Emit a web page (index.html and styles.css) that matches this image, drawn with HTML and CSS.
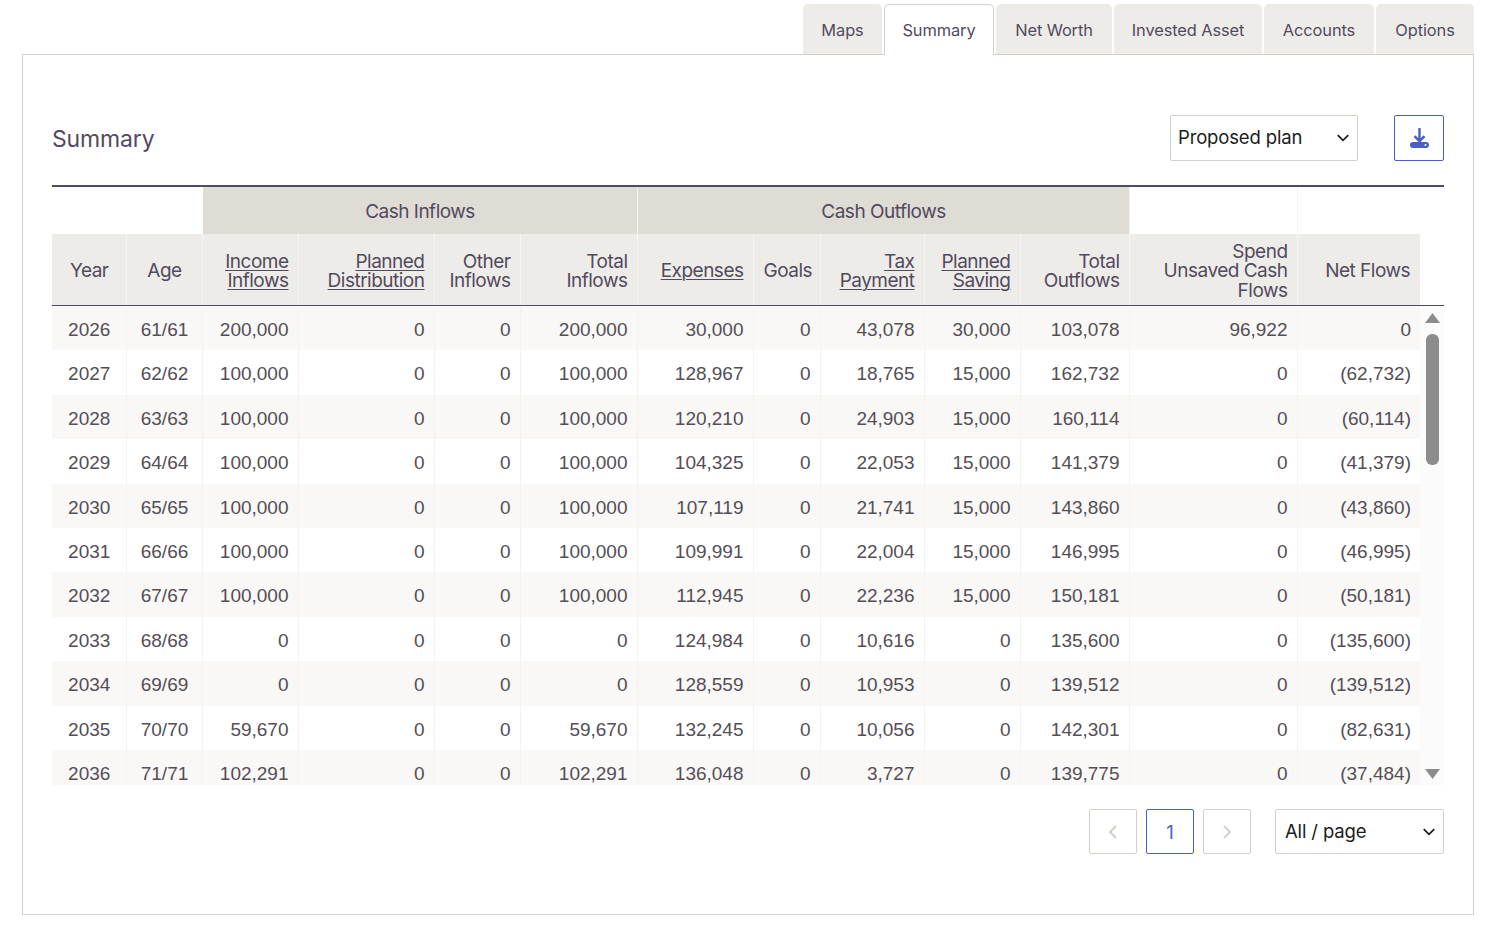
FILE: index.html
```html
<!DOCTYPE html>
<html lang="en">
<head>
<meta charset="utf-8">
<title>Summary</title>
<link rel="stylesheet" href="styles.css">
</head>
<body>
<nav class="tabs">
  <a class="tab t-maps">Maps</a>
  <a class="tab t-summary active">Summary</a>
  <a class="tab t-net">Net Worth</a>
  <a class="tab t-inv">Invested Asset</a>
  <a class="tab t-acc">Accounts</a>
  <a class="tab t-opt">Options</a>
</nav>
<main class="card">
  <header class="top">
    <h1 class="title">Summary</h1>
    <div class="select plan"><span>Proposed plan</span>
      <svg class="chev" viewBox="0 0 12 8"><path d="M1.500 1.500 6 6l4.500-4.500" /></svg>
    </div>
    <button class="dl" aria-label="Download">
      <svg viewBox="0 0 21 20" width="21" height="20">
        <path class="dl-arrow" d="M10.500 0v13M5.500 8.200l5 5 5-5"/>
        <path fill-rule="evenodd" d="M4 14h13a3 3 0 0 1 0 6H4a3 3 0 0 1 0-6zm12.500 2a1 1 0 1 0 0 2 1 1 0 0 0 0-2z"/>
      </svg>
    </button>
  </header>
  <section class="grid">
    <div class="head">
      <table>
        <colgroup><col class="c1"><col class="c2"><col class="c3"><col class="c4"><col class="c5"><col class="c6"><col class="c7"><col class="c8"><col class="c9"><col class="c10"><col class="c11"><col class="c12"><col class="c13"></colgroup>
        <thead>
          <tr class="group">
            <th colspan="2" class="blank"></th>
            <th colspan="4" class="band">Cash Inflows</th>
            <th colspan="5" class="band">Cash Outflows</th>
            <th class="blank"></th>
            <th class="blank"></th>
          </tr>
          <tr class="cols">
            <th class="ctr">Year</th><th class="ctr">Age</th>
            <th><u>Income<br>Inflows</u></th><th><u>Planned<br>Distribution</u></th><th>Other<br>Inflows</th><th>Total<br>Inflows</th>
            <th><u>Expenses</u></th><th>Goals</th><th><u>Tax<br>Payment</u></th><th><u>Planned<br>Saving</u></th><th>Total<br>Outflows</th>
            <th>Spend<br>Unsaved Cash<br>Flows</th><th>Net Flows</th>
          </tr>
        </thead>
      </table>
    </div>
    <div class="scroll">
      <table class="rows">
        <colgroup><col class="c1"><col class="c2"><col class="c3"><col class="c4"><col class="c5"><col class="c6"><col class="c7"><col class="c8"><col class="c9"><col class="c10"><col class="c11"><col class="c12"><col class="c13"></colgroup>
        <tbody>
          <tr><td class="ctr">2026</td><td class="ctr">61/61</td><td>200,000</td><td>0</td><td>0</td><td>200,000</td><td>30,000</td><td>0</td><td>43,078</td><td>30,000</td><td>103,078</td><td>96,922</td><td>0</td></tr>
          <tr><td class="ctr">2027</td><td class="ctr">62/62</td><td>100,000</td><td>0</td><td>0</td><td>100,000</td><td>128,967</td><td>0</td><td>18,765</td><td>15,000</td><td>162,732</td><td>0</td><td>(62,732)</td></tr>
          <tr><td class="ctr">2028</td><td class="ctr">63/63</td><td>100,000</td><td>0</td><td>0</td><td>100,000</td><td>120,210</td><td>0</td><td>24,903</td><td>15,000</td><td>160,114</td><td>0</td><td>(60,114)</td></tr>
          <tr><td class="ctr">2029</td><td class="ctr">64/64</td><td>100,000</td><td>0</td><td>0</td><td>100,000</td><td>104,325</td><td>0</td><td>22,053</td><td>15,000</td><td>141,379</td><td>0</td><td>(41,379)</td></tr>
          <tr><td class="ctr">2030</td><td class="ctr">65/65</td><td>100,000</td><td>0</td><td>0</td><td>100,000</td><td>107,119</td><td>0</td><td>21,741</td><td>15,000</td><td>143,860</td><td>0</td><td>(43,860)</td></tr>
          <tr><td class="ctr">2031</td><td class="ctr">66/66</td><td>100,000</td><td>0</td><td>0</td><td>100,000</td><td>109,991</td><td>0</td><td>22,004</td><td>15,000</td><td>146,995</td><td>0</td><td>(46,995)</td></tr>
          <tr><td class="ctr">2032</td><td class="ctr">67/67</td><td>100,000</td><td>0</td><td>0</td><td>100,000</td><td>112,945</td><td>0</td><td>22,236</td><td>15,000</td><td>150,181</td><td>0</td><td>(50,181)</td></tr>
          <tr><td class="ctr">2033</td><td class="ctr">68/68</td><td>0</td><td>0</td><td>0</td><td>0</td><td>124,984</td><td>0</td><td>10,616</td><td>0</td><td>135,600</td><td>0</td><td>(135,600)</td></tr>
          <tr><td class="ctr">2034</td><td class="ctr">69/69</td><td>0</td><td>0</td><td>0</td><td>0</td><td>128,559</td><td>0</td><td>10,953</td><td>0</td><td>139,512</td><td>0</td><td>(139,512)</td></tr>
          <tr><td class="ctr">2035</td><td class="ctr">70/70</td><td>59,670</td><td>0</td><td>0</td><td>59,670</td><td>132,245</td><td>0</td><td>10,056</td><td>0</td><td>142,301</td><td>0</td><td>(82,631)</td></tr>
          <tr><td class="ctr">2036</td><td class="ctr">71/71</td><td>102,291</td><td>0</td><td>0</td><td>102,291</td><td>136,048</td><td>0</td><td>3,727</td><td>0</td><td>139,775</td><td>0</td><td>(37,484)</td></tr>
        </tbody>
      </table>
      <div class="bar">
        <span class="arrow up"></span>
        <span class="thumb"></span>
        <span class="arrow down"></span>
      </div>
    </div>
  </section>
  <footer class="pager">
    <button class="pg off" aria-label="Previous"><svg viewBox="0 0 10 16"><path d="M8 2 2 8l6 6"/></svg></button>
    <button class="pg cur">1</button>
    <button class="pg off" aria-label="Next"><svg viewBox="0 0 10 16"><path d="M2 2l6 6-6 6"/></svg></button>
    <div class="select size"><span>All / page</span>
      <svg class="chev" viewBox="0 0 12 8"><path d="M1.500 1.500 6 6l4.500-4.500" /></svg>
    </div>
  </footer>
</main>
</body>
</html>
```
FILE: styles.css
```css
* { box-sizing: border-box; }
html, body { margin: 0; padding: 0; background: #fff; }
body {
  width: 1486px;
  height: 933px;
  overflow: hidden;
  font-family: Inter, "Liberation Sans", sans-serif;
  color: #524a5e;
  padding: 4px 12px 0 22px;
}
.tabs {
  display: flex;
  justify-content: flex-end;
  gap: 2px;
  height: 51px;
  position: relative;
  z-index: 1;
  font-size: 16.400px;
  letter-spacing: -0.1px;
}
.tab {
  display: flex;
  align-items: center;
  justify-content: center;
  height: 50px;
  background: #eeece8;
  border-radius: 5px 5px 0 0;
  padding-top: 2px;
}
.t-maps { width: 79px; }
.t-summary { width: 110px; height: 51px; background: #fff; border: 1px solid #d3d0c8; border-bottom: 0; padding-top: 0; }
.t-net { width: 116px; }
.t-inv { width: 148px; }
.t-acc { width: 110px; }
.t-opt { width: 98px; }
.card {
  margin-top: -1px;
  width: 1452px;
  height: 861px;
  border: 1px solid #d3d0c8;
  padding: 60px 29px 0;
}
.top { display: flex; align-items: center; height: 46px; margin-bottom: 24px; }
.title { margin: 0 auto 0 0; font-size: 23px; font-weight: 400; letter-spacing: -0.15px; padding-top: 2px; }
.select {
  display: flex;
  align-items: center;
  justify-content: space-between;
  height: 46px;
  border: 1px solid #d3d0c8;
  border-radius: 2px;
  font-size: 18.500px;
  letter-spacing: -0.15px;
  color: #1c1b20;
  padding: 0 7px 2px;
}
.plan { width: 188px; }
.chev { width: 14px; height: 10px; fill: none; stroke: #1c1b20; stroke-width: 1.500; margin-top: 2px; }
.dl {
  display: flex;
  align-items: center;
  justify-content: center;
  width: 50px;
  height: 46px;
  margin-left: 36px;
  background: #fff;
  border: 1px solid #4a5fc1;
  border-radius: 2px;
  padding: 0;
}
.dl svg { fill: #4a5fc1; }
.dl-arrow { fill: none; stroke: #4a5fc1; stroke-width: 2.400; }
.grid { border-top: 2px solid #524a5e; width: 1392px; }
.head { border-bottom: 1px solid #524a5e; }
table { border-collapse: collapse; table-layout: fixed; width: 1368px; }
.c1 { width: 74px; }
.c2 { width: 76px; }
.c3 { width: 96px; }
.c4 { width: 136px; }
.c5 { width: 86px; }
.c6 { width: 117px; }
.c7 { width: 116px; }
.c8 { width: 67px; }
.c9 { width: 104px; }
.c10 { width: 96px; }
.c11 { width: 109px; }
.c12 { width: 168px; }
.c13 { width: 123px; }
th { font-weight: 400; padding: 3px 9px 0 10px; font-size: 19px; letter-spacing: -0.5px; line-height: 19.500px; text-align: right; }
.group th { height: 47px; text-align: center; border-right: 1px solid #f4f3f0; }
.group .blank { background: #fff; }
.group th:first-child { border-right: 0; }
.group .band { background: #dfdbd5; border-right: 1px solid #f4f3f0; border-left: 1px solid #fff; }
.cols th { height: 71px; background: #eeece8; border-right: 1px solid #f7f6f3; }
.cols th:last-child, .group th:last-child { border-right: 0; padding-right: 10px; }
th.ctr, td.ctr { text-align: center; }
th u { text-underline-offset: 2px; text-decoration-thickness: 1px; }
.scroll { display: flex; height: 479px; overflow: hidden; }
.rows { flex: none; align-self: flex-start; }
td {
  height: 44.400px;
  padding: 3.800px 9px 0 10px;
  font-size: 19px;
  text-align: right;
  color: #544e56;
  border-right: 1px solid #f4f3f0;
  font-family: "Liberation Sans", Arial, sans-serif;
}
td:last-child { border-right: 0; }
.rows tr:nth-child(odd) td { background: #f9f8f6; }
.bar { flex: 1; position: relative; display: flex; flex-direction: column; align-items: center; padding-top: 28px; background: #fcfbfb; }
.thumb { width: 13px; height: 131px; background: #8c8c8c; border-radius: 6px; }
.arrow { position: absolute; left: 5px; width: 15px; height: 10px; background: #8c8c8c; }
.up { top: 7px; clip-path: polygon(50% 0, 100% 100%, 0 100%); }
.down { top: 463px; clip-path: polygon(0 0, 100% 0, 50% 100%); }
.pager { display: flex; justify-content: flex-end; align-items: center; margin-top: 24px; width: 1392px; }
.pg {
  width: 48px;
  height: 45px;
  background: #fff;
  border: 1px solid #d3d0c8;
  border-radius: 2px;
  margin-right: 9px;
  padding: 0;
  font: 400 18.500px Inter, "Liberation Sans", sans-serif;
  display: flex;
  align-items: center;
  justify-content: center;
}
.pg svg { width: 10px; height: 16px; fill: none; stroke: #d3d0c8; stroke-width: 2; }
.cur { border-color: #4a5fc1; color: #4a5fc1; }
.pager .pg:nth-child(3) { margin-right: 24px; }
.size { width: 169px; height: 45px; padding: 0 7px 2px 9px; }
```
